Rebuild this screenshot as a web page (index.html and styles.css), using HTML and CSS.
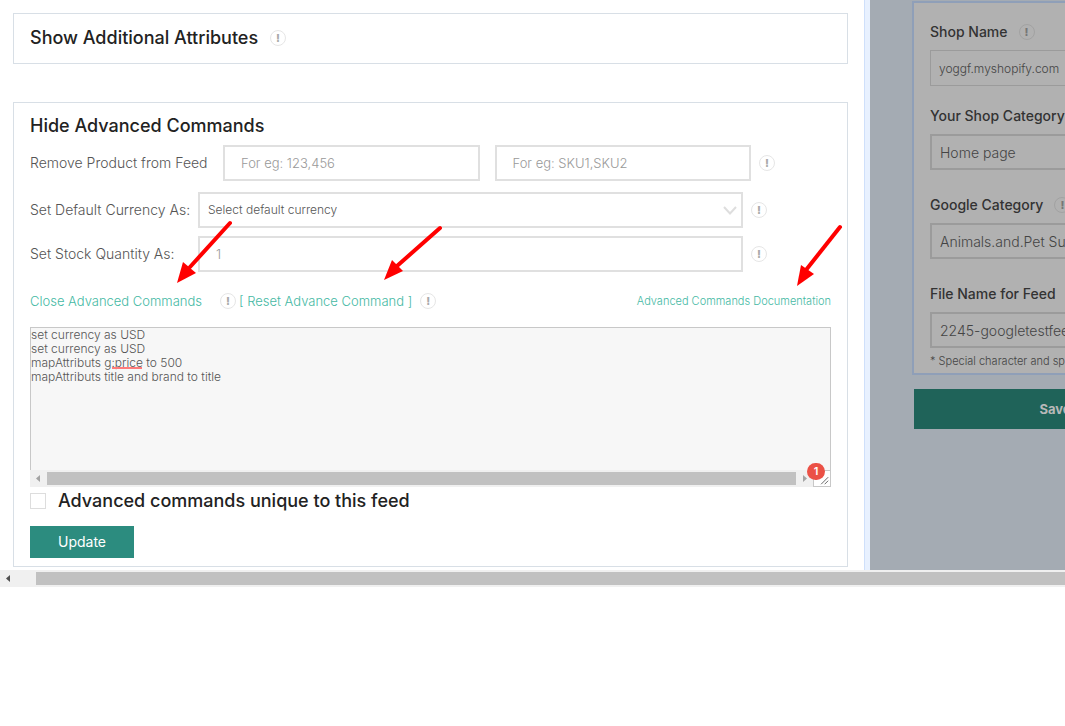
FILE: index.html
```html
<!DOCTYPE html>
<html lang="en">
  <head>
    <meta charset="UTF-8" />
    <meta name="viewport" content="width=device-width, initial-scale=1" />
    <title>Feed Settings</title>
    <link rel="stylesheet" href="styles.css">
  </head>
  <body>
    <div class="app">
      <main class="main">
        <section class="panel panel-small">
          <h2 class="panel-title">Show Additional Attributes</h2>
          <button type="button" class="hint" aria-label="Help">!</button>
        </section>

        <form class="panel panel-form">
          <h2 class="panel-title">Hide Advanced Commands</h2>

          <div class="row row-remove">
            <label for="removeIds">Remove Product from Feed</label>
            <input type="text" id="removeIds" class="box" placeholder="For eg: 123,456" />
            <input type="text" id="removeSkus" class="box" placeholder="For eg: SKU1,SKU2" aria-label="SKUs to remove" />
            <button type="button" class="hint" aria-label="Help">!</button>
          </div>

          <div class="row row-currency">
            <label for="currency">Set Default Currency As:</label>
            <div class="select-wrap">
              <select id="currency" class="box box-select">
                <option>Select default currency</option>
              </select>
              <svg class="chevron" viewBox="0 0 14 9" width="14" height="9">
                <path d="M1 1 L7 7.5 L13 1" fill="none" stroke="#dedede" stroke-width="2" />
              </svg>
            </div>
            <button type="button" class="hint" aria-label="Help">!</button>
          </div>

          <div class="row row-stock">
            <label for="stock">Set Stock Quantity As:</label>
            <input type="text" id="stock" class="box" placeholder="1" />
            <button type="button" class="hint" aria-label="Help">!</button>
          </div>

          <div class="links">
            <a href="#" class="link-close">Close Advanced Commands</a>
            <button type="button" class="hint" aria-label="Help">!</button>
            <a href="#" class="link-reset">[ Reset Advance Command ]</a>
            <button type="button" class="hint" aria-label="Help">!</button>
            <a href="#" class="link-docs">Advanced Commands Documentation</a>
          </div>

          <div class="editor">
            <textarea class="commands" aria-label="Advanced commands" wrap="off" spellcheck="false">set currency as USD
set currency as USD
mapAttributs g:price to 500
mapAttributs title and brand to title</textarea>
            <span class="misspelled"></span>
            <div class="scrollbar">
              <svg class="scroll-arrow" viewBox="0 0 17 17"><path d="M10 5 V12 L6 8.5 Z" fill="#a3a3a3" /></svg>
              <div class="thumb"></div>
              <svg class="scroll-arrow" viewBox="0 0 17 17"><path d="M7 5 V12 L11 8.5 Z" fill="#a3a3a3" /></svg>
              <svg class="resizer" viewBox="0 0 18 17"><path d="M8 15 L16 7 M12 15 L16 11" stroke="#555" stroke-width="1" /></svg>
            </div>
            <span class="error-count">1</span>
          </div>

          <div class="check">
            <input type="checkbox" id="unique" />
            <label for="unique" class="panel-title">Advanced commands unique to this feed</label>
          </div>

          <button type="button" class="update">Update</button>
        </form>

        <!-- arrows pointing at the three links -->
        <svg class="arrow arrow-close" viewBox="0 0 56 64" width="56" height="64">
          <path d="M54 3 L14 47" /><polygon points="1,63 7,42 20,53" />
        </svg>
        <svg class="arrow arrow-reset" viewBox="0 0 60 56" width="60" height="56">
          <path d="M57 3 L14 41" /><polygon points="1,55 9,35 20,46" />
        </svg>
        <svg class="arrow arrow-docs" viewBox="0 0 48 64" width="48" height="64">
          <path d="M45 3 L11 46" /><polygon points="2,62 6,41 19,50" />
        </svg>
      </main>

      <aside class="sidebar">
        <div class="card">
          <div class="field field-shop">
            <div class="field-head">
              <label for="shopName">Shop Name</label>
              <button type="button" class="hint" aria-label="Help">!</button>
            </div>
            <input type="text" id="shopName" value="yoggf.myshopify.com" />
          </div>
          <div class="field">
            <div class="field-head"><label for="shopCategory">Your Shop Category</label></div>
            <input type="text" id="shopCategory" value="Home page" />
          </div>
          <div class="field">
            <div class="field-head">
              <label for="googleCategory">Google Category</label>
              <button type="button" class="hint" aria-label="Help">!</button>
            </div>
            <input type="text" id="googleCategory" value="Animals.and.Pet Supplies" />
          </div>
          <div class="field field-last">
            <div class="field-head"><label for="fileName">File Name for Feed</label></div>
            <input type="text" id="fileName" value="2245-googletestfeed" />
          </div>
          <p class="note">* Special character and sp</p>
        </div>
        <button type="button" class="save">Save</button>
      </aside>
    </div>

    <div class="page-scroll">
      <svg class="scroll-arrow" viewBox="0 0 17 17"><path d="M10 5 V12 L6 8.5 Z" fill="#505050" /></svg>
      <div class="thumb"></div>
    </div>
  </body>
</html>
```
FILE: styles.css
```css
* {
  box-sizing: border-box;
}
body {
  margin: 0;
  font-family: Inter, "Open Sans", sans-serif;
  font-size: 14px;
  font-weight: 300;
  line-height: 20px;
  color: #555;
  background: #fff;
  overflow-x: hidden;
}
button,
input,
select,
textarea {
  font: inherit;
  color: inherit;
  border-radius: 0;
}
a {
  color: #45b9a4;
  text-decoration: none;
}
.app {
  display: flex;
}

/* Left side */
.main {
  position: relative;
  flex: 1;
  min-width: 0;
  padding: 13px 16px 3px 13px;
  border-right: 1px solid #cfe0fb;
  box-shadow: 5px 0 0 #e8f1ff;
}
.panel {
  border: 1px solid #d8dfe6;
}
.panel-small {
  display: flex;
  align-items: center;
  gap: 12px;
  height: 51px;
  padding: 0 16px 2px;
  margin-bottom: 38px;
}
.panel-form {
  padding: 13px 16px 8px;
}
.panel-title {
  margin: 0;
  font-size: 18px;
  font-weight: 500;
  line-height: 20px;
  color: #222;
}
.hint {
  flex: none;
  width: 16px;
  height: 16px;
  padding: 0;
  border: 1px solid #e6e6e6;
  border-radius: 50%;
  background: transparent;
  color: #aaa;
  font-size: 11px;
  font-weight: 800;
  line-height: 14px;
  text-align: center;
}
.row {
  display: flex;
  align-items: center;
}
.row label {
  flex: none;
  width: 168px;
}
.row .hint {
  margin-left: 8px;
}
.row-remove {
  margin: 9px 56px 11px 0;
}
.row-remove label {
  width: 193px;
}
.row-remove .box + .box {
  margin-left: 15px;
}
.row-currency,
.row-stock {
  margin: 0 64px 8px 0;
}
.box {
  flex: 1;
  width: 100%;
  min-width: 0;
  height: 36px;
  padding: 0 16px;
  border: 2px solid #e0e0e0;
  background: #fff;
  font-size: 13px;
  outline: none;
}
.box::placeholder {
  color: #999;
}
.select-wrap {
  position: relative;
  display: flex;
  flex: 1;
}
.box-select {
  appearance: none;
  padding: 0 8px;
  font-size: 12px;
}
.chevron {
  position: absolute;
  top: 14px;
  right: 6px;
}

.links {
  display: flex;
  align-items: center;
  margin: 19px 0 16px;
  font-size: 13px;
}
.link-close {
  margin-right: 18px;
}
.link-reset {
  margin: 0 8px 0 3px;
}
.link-docs {
  margin-left: auto;
  font-size: 11px;
}

.editor {
  position: relative;
  height: 160px;
}
.commands {
  display: block;
  width: 100%;
  height: 143px;
  padding: 0;
  border: 1px solid #c8c8c8;
  border-bottom: 0;
  background: #f7f7f7;
  font-size: 12px;
  line-height: 14px;
  resize: none;
  overflow: hidden;
  outline: none;
}
.misspelled {
  position: absolute;
  top: 40px;
  left: 82px;
  width: 30px;
  height: 2px;
  background: #ff7b7b;
}
.scrollbar,
.page-scroll {
  display: flex;
  height: 17px;
  background: #f0f0f0;
}
.scroll-arrow {
  flex: none;
  width: 17px;
  height: 17px;
}
.thumb {
  flex: 1;
  margin: 2px 0;
  background: #c1c1c1;
}
.resizer {
  flex: none;
  width: 18px;
  height: 17px;
  border: 1px solid #c8c8c8;
  background: #fff;
}
.error-count {
  position: absolute;
  right: 6px;
  bottom: 7px;
  width: 18px;
  height: 17px;
  border-radius: 9px;
  background: #eb5146;
  color: #fff;
  font-size: 11px;
  font-weight: 600;
  line-height: 17px;
  text-align: center;
}

.check {
  display: flex;
  align-items: center;
  gap: 12px;
  margin: 4px 0 15px;
}
.check input {
  appearance: none;
  width: 16px;
  height: 16px;
  margin: 0;
  border: 1px solid #ddd;
  background: #fff;
}
.update {
  display: block;
  width: 104px;
  height: 32px;
  border: 0;
  background: #2c8c7f;
  color: #fff;
  font-weight: 400;
}

.arrow {
  position: absolute;
  pointer-events: none;
}
.arrow path {
  fill: none;
  stroke: #f00;
  stroke-width: 4;
  stroke-linecap: round;
}
.arrow polygon {
  fill: #f00;
}
.arrow-close {
  top: 220px;
  left: 176px;
}
.arrow-reset {
  top: 225px;
  left: 383px;
}
.arrow-docs {
  top: 224px;
  left: 795px;
}

/* Dimmed sidebar, runs off the right edge */
.sidebar {
  flex: 0 0 195px;
  margin-left: 5px;
  padding: 1px 0 0 42px;
  background: #a4abb3;
  overflow: hidden;
}
.card {
  width: 286px;
  padding: 19px 16px 2px;
  border: 2px solid #8f9fb8;
  background: #b1b1b1;
  color: #444;
}
.field {
  margin-bottom: 25px;
}
.field-shop {
  margin-bottom: 20px;
}
.field-last {
  margin-bottom: 3px;
}
.field-head {
  display: flex;
  align-items: center;
  gap: 11px;
  margin-bottom: 8px;
  color: #333;
  font-weight: 500;
}
.field input {
  display: block;
  width: 100%;
  height: 36px;
  padding: 0 8px;
  border: 2px solid #9b9b9b;
  background: transparent;
  outline: none;
}
.field-shop input {
  border-width: 1px;
  font-size: 12px;
}
.sidebar .hint {
  border-color: #a2a2a2;
  color: #777;
}
.note {
  margin: 0;
  font-size: 11px;
  white-space: nowrap;
}
.save {
  display: block;
  width: 282px;
  height: 40px;
  margin: 14px 0 0 2px;
  border: 0;
  background: #1f6359;
  color: #b8b8b8;
  font-size: 13px;
  font-weight: 700;
}

.page-scroll .scroll-arrow {
  margin-right: 19px;
}
```
